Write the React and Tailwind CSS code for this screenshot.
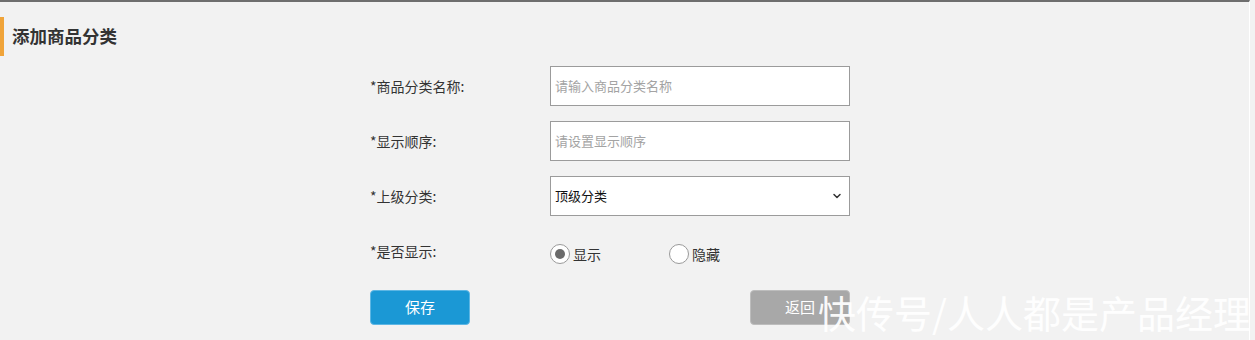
import { ChevronDown } from 'lucide-react';

const font = { fontFamily: '"Noto Sans CJK SC", "Noto Sans", sans-serif' };

function Field({ label, children }) {
  return (
    <div className="flex items-center h-[40px]">
      <span className="w-[180px] text-[14px] text-[#333]">{label}</span>
      {children}
    </div>
  );
}

function Radio({ checked, label }) {
  return (
    <label className="flex items-center gap-[3px] w-[119px]">
      <span className="w-[20px] h-[20px] rounded-full border border-[#9a9a9a] bg-white flex items-center justify-center">
        {checked && <span className="w-[10px] h-[10px] rounded-full bg-[#6b6b6b]" />}
      </span>
      <span className="text-[14px] text-[#333]">{label}</span>
    </label>
  );
}

export default function App() {
  return (
    <div style={font} className="relative w-[1255px] h-[340px] bg-[#f2f2f2] overflow-hidden">
      <div className="w-[1250px] h-full border-t-2 border-[#6e6e6e] border-r border-r-white">
        {/* header */}
        <div className="mt-[15px] flex items-center h-[39px]">
          <div className="w-[4px] h-full bg-[#f0a43a]" />
          <h2 className="ml-[8px] text-[17.5px] font-bold text-[#333]">添加商品分类</h2>
        </div>

        {/* form */}
        <div className="ml-[370px] mt-[10px] flex flex-col gap-[15px]">
          <Field label="*商品分类名称:">
            <div className="w-[300px] h-[40px] border border-[#9b9b9b] bg-white flex items-center px-[4px] text-[13px] text-[#a3a3a3]">
              请输入商品分类名称
            </div>
          </Field>
          <Field label="*显示顺序:">
            <div className="w-[300px] h-[40px] border border-[#9b9b9b] bg-white flex items-center px-[4px] text-[13px] text-[#a3a3a3]">
              请设置显示顺序
            </div>
          </Field>
          <Field label="*上级分类:">
            <div className="w-[300px] h-[40px] border border-[#9b9b9b] bg-white flex items-center justify-between pl-[4px] pr-[6px] text-[13px] text-[#111]">
              <span>顶级分类</span>
              <ChevronDown size={12} strokeWidth={3} className="text-[#333]" />
            </div>
          </Field>
          <div className="flex items-center h-[40px] mt-[3px]">
            <span className="w-[180px] text-[14px] text-[#333] -mt-[6px]">*是否显示:</span>
            <div className="flex items-center">
              <Radio checked label="显示" />
              <Radio label="隐藏" />
            </div>
          </div>
          <div className="flex mt-[1px]">
            <button className="w-[100px] h-[35px] rounded-[4px] bg-[#1b98d5] border border-[#5db6e4] text-white text-[15px]">
              保存
            </button>
            <button className="ml-[280px] w-[100px] h-[35px] rounded-[4px] bg-[#a8a8a8] border border-[#bdbdbd] text-white text-[15px]">
              返回
            </button>
          </div>
        </div>
      </div>

      {/* watermark */}
      <div className="absolute left-[818px] top-[293px] text-[38px] leading-none text-white/95 whitespace-nowrap pointer-events-none">
        快传号/人人都是产品经理
      </div>
    </div>
  );
}
